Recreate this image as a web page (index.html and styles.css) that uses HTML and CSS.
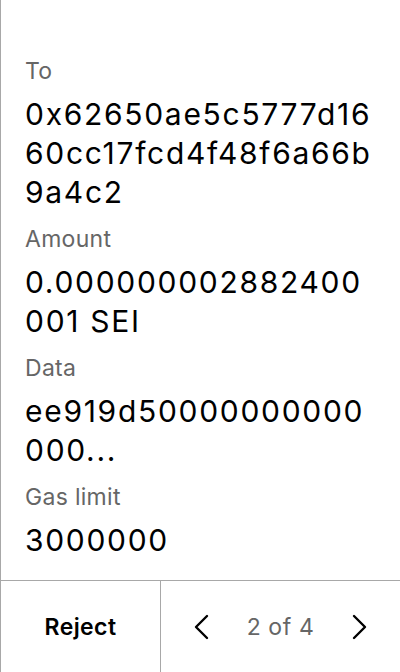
FILE: index.html
```html
<!DOCTYPE html>
<html>
<head>
<meta charset="utf-8">
<link rel="stylesheet" href="styles.css">
</head>
<body>
<div class="screen">
  <div class="content">
    <div class="field">
      <div class="label">To</div>
      <div class="value">0x62650ae5c5777d1660cc17fcd4f48f6a66b9a4c2</div>
    </div>
    <div class="field">
      <div class="label">Amount</div>
      <div class="value">0.000000002882400001 SEI</div>
    </div>
    <div class="field">
      <div class="label">Data</div>
      <div class="value">ee919d50000000000000...</div>
    </div>
    <div class="field">
      <div class="label">Gas limit</div>
      <div class="value">3000000</div>
    </div>
  </div>
  <div class="footer">
    <div class="reject">Reject</div>
    <div class="pager">
      <svg class="chev" width="16" height="26" viewBox="0 0 16 26"><path d="M14 2 L3 13 L14 24" fill="none" stroke="#000" stroke-width="2.4" stroke-linecap="round" stroke-linejoin="round"/></svg>
      <span class="count">2 of 4</span>
      <svg class="chev" width="16" height="26" viewBox="0 0 16 26"><path d="M2 2 L13 13 L2 24" fill="none" stroke="#000" stroke-width="2.4" stroke-linecap="round" stroke-linejoin="round"/></svg>
    </div>
  </div>
</div>
</body>
</html>
```
FILE: styles.css
```css
html, body {
  margin: 0;
  padding: 0;
  background: #fff;
}
body {
  font-family: Inter, "Noto Sans", sans-serif;
  color: #000;
}
.screen {
  width: 400px;
  height: 672px;
  box-sizing: border-box;
  border-left: 1px solid #a8a8a8;
  display: flex;
  flex-direction: column;
}
.content {
  flex: 1;
  padding: 56px 26px 0 24px;
  display: flex;
  flex-direction: column;
  gap: 12px;
}
.label {
  font-size: 23px;
  line-height: 30px;
  letter-spacing: 0.3px;
  color: #666;
  margin-bottom: 9px;
}
.value {
  font-size: 30px;
  line-height: 39px;
  letter-spacing: 1.7px;
  word-break: break-all;
}
.footer {
  height: 92px;
  border-top: 1px solid #a8a8a8;
  display: flex;
  box-sizing: border-box;
}
.reject {
  width: 159px;
  border-right: 1px solid #a8a8a8;
  display: flex;
  align-items: center;
  justify-content: center;
  font-size: 23px;
  font-weight: 600;
  letter-spacing: 0.4px;
}
.pager {
  flex: 1;
  display: flex;
  align-items: center;
  justify-content: space-between;
  padding: 0 32px 0 32px;
}
.count {
  font-size: 23px;
  letter-spacing: 0.6px;
  color: #666;
}
.chev {
  display: block;
}
```
